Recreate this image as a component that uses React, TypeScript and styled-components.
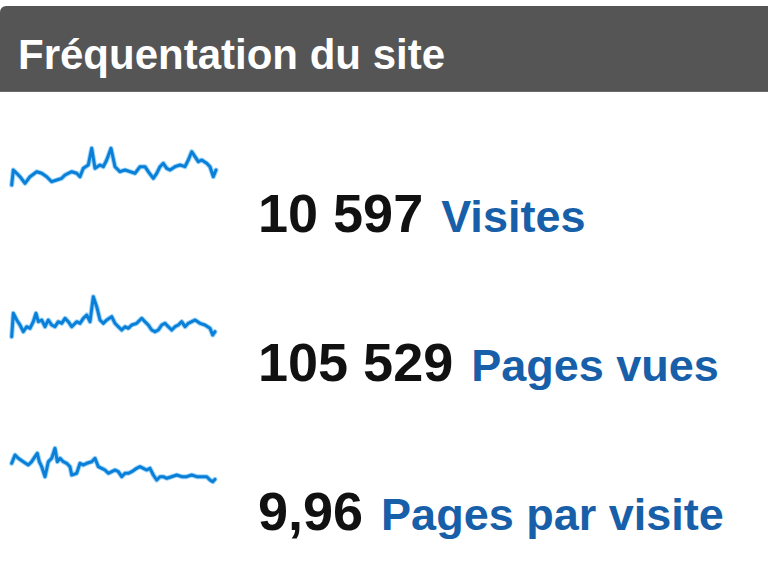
import React from "react";
import styled, { createGlobalStyle } from "styled-components";

const GlobalStyle = createGlobalStyle`
  html, body { margin: 0; padding: 0; background: #ffffff; }
  body { font-family: "Liberation Sans", Arial, sans-serif; }
`;

const Widget = styled.div`
  width: 768px;
  height: 574px;
  padding-top: 6px;
  box-sizing: border-box;
  background: #ffffff;
  overflow: hidden;
`;

const Header = styled.div`
  height: 86px;
  box-sizing: border-box;
  background: #555555;
  border-top-left-radius: 6px;
  border-bottom: 1px solid #6a6a6a;
  padding: 28px 0 0 18px;
`;

const Title = styled.h1`
  margin: 0;
  font-family: "Liberation Sans", Arial, sans-serif;
  font-weight: 700;
  font-size: 42px;
  line-height: 42px;
  color: #ffffff;
  letter-spacing: 0;
`;

const Rows = styled.div`
  display: flex;
  flex-direction: column;
  padding: 48px 0 0 10px;
`;

const Row = styled.div`
  display: flex;
  align-items: flex-start;
  height: 149px;
`;

const Spark = styled.svg`
  flex: 0 0 auto;
  width: 210px;
  height: 52px;
  margin-right: 38px;
  overflow: visible;
`;

const Stat = styled.div`
  display: flex;
  align-items: baseline;
  gap: 18px;
  margin-top: 47px;
  white-space: nowrap;
`;

const Value = styled.span`
  font-family: "Liberation Sans", Arial, sans-serif;
  font-weight: 700;
  font-size: 54px;
  line-height: 53px;
  color: #111111;
`;

const Label = styled.span`
  font-family: "Liberation Sans", Arial, sans-serif;
  font-weight: 700;
  font-size: 45px;
  line-height: 53px;
  color: #175fa8;
`;

type Pt = [number, number];

const visits: Pt[] = [
  [1.7, 45], [3.3, 30], [6.7, 33.3], [10, 36.7], [15, 43.3], [20, 36.7], [26.7, 31.7],
  [31.7, 33.3], [36.7, 36.7], [41.7, 41.7], [46.7, 40], [51.7, 38.3], [55, 35], [61.7, 31.7],
  [66.7, 33.3], [70, 36.7], [73.3, 28.3], [78.3, 25], [81.7, 8.3], [85, 28.3], [90, 25],
  [93.3, 26.7], [96.7, 20], [101, 8.3], [105, 26.7], [110, 31.7], [115, 30], [120, 31.7],
  [125, 33.3], [130, 26.7], [135, 26.7], [138.3, 31.7], [143.3, 38.3], [146.7, 33.3],
  [150, 26.7], [153.3, 23.3], [156.7, 28.3], [160, 30], [165, 26.7], [170, 25], [175, 26.7],
  [178.3, 20], [181.7, 11.7], [185, 16.7], [188.3, 21.7], [191.7, 20], [196.7, 23.3],
  [200, 26.7], [203.3, 36.7], [206, 30],
];

const pages: Pt[] = [
  [1.7, 47.7], [3.3, 24.3], [6.7, 31], [10, 36], [13.3, 42.7], [16.7, 37.7], [20, 39.3],
  [23.3, 32.7], [26, 24.3], [28.3, 32.7], [31.7, 31], [35, 37.7], [38.3, 31], [41.7, 36],
  [45, 37.7], [48.3, 32.7], [51.7, 34.3], [55, 29.3], [58.3, 32.7], [61.7, 37.7], [66.7, 32.7],
  [70, 34.3], [73.3, 29.3], [76.7, 26], [80, 32.7], [83.3, 7.7], [86.7, 17.7], [90, 31],
  [93.3, 34.3], [96.7, 31], [101.7, 27.7], [105, 34.3], [108.3, 37.7], [111.7, 41], [115, 37.7],
  [118.3, 39.3], [121.7, 36], [126.7, 34.3], [131.7, 29.3], [135, 32.7], [138.3, 36],
  [141.7, 41], [145, 42.7], [148.3, 41], [151.7, 36], [155, 34.3], [158.3, 37.7], [161.7, 41],
  [165, 37.7], [168.3, 36], [171.7, 32.7], [175, 37.7], [178.3, 34.3], [181.7, 32.7], [185, 31],
  [190, 34.3], [195, 36], [200, 39.3], [202.7, 46], [205, 42.7],
];

const perVisit: Pt[] = [
  [1.7, 25.3], [5, 17], [8.3, 20.3], [13.3, 23.7], [18.3, 27], [21.7, 23.7], [25, 18.7],
  [27.3, 15.3], [29.3, 23.7], [31.7, 28.7], [35, 38.7], [38.3, 23.7], [41.7, 20.3], [45, 10.3],
  [47.3, 23.7], [50, 20.3], [53.3, 23.7], [56.7, 25.3], [60, 28.7], [61.7, 37], [66.7, 35.3],
  [70, 25.3], [73.3, 27], [76.7, 25.3], [81.7, 23.7], [85, 20.3], [88.3, 28.7], [91.7, 30.3],
  [95, 32], [98.3, 35.3], [101.7, 33.7], [105, 32], [108.3, 33.7], [111.7, 38.7], [115, 35.3],
  [118.3, 35.3], [121.7, 33.7], [126.7, 30.3], [130, 28.7], [133.3, 30.3], [136.7, 32],
  [140, 30.3], [143.3, 37], [146.7, 42], [150, 38.7], [153.3, 38.7], [156.7, 40.3],
  [161.7, 38.7], [166.7, 37], [171.7, 38.7], [176.7, 38.7], [181.7, 37], [186.7, 38.7],
  [191.7, 38.7], [196.7, 38.7], [200, 42], [202.7, 43.7], [205, 41.3],
];

const Sparkline: React.FC<{ points: Pt[] }> = ({ points }) => {
  const p = points.map(([x, y]) => `${x},${y}`).join(" ");
  return (
    <Spark viewBox="0 0 210 52">
      <polyline points={p} fill="none" stroke="#3aa8f2" strokeWidth={5} strokeLinejoin="round" strokeLinecap="round" opacity={0.5} />
      <polyline points={p} fill="none" stroke="#0a7fd8" strokeWidth={3} strokeLinejoin="round" strokeLinecap="round" />
    </Spark>
  );
};

const stats = [
  { points: visits, value: "10 597", label: "Visites" },
  { points: pages, value: "105 529", label: "Pages vues" },
  { points: perVisit, value: "9,96", label: "Pages par visite" },
];

export default function App() {
  return (
    <>
      <GlobalStyle />
      <Widget>
        <Header>
          <Title>Fréquentation du site</Title>
        </Header>
        <Rows>
          {stats.map((s) => (
            <Row key={s.label}>
              <Sparkline points={s.points} />
              <Stat>
                <Value>{s.value}</Value>
                <Label>{s.label}</Label>
              </Stat>
            </Row>
          ))}
        </Rows>
      </Widget>
    </>
  );
}
